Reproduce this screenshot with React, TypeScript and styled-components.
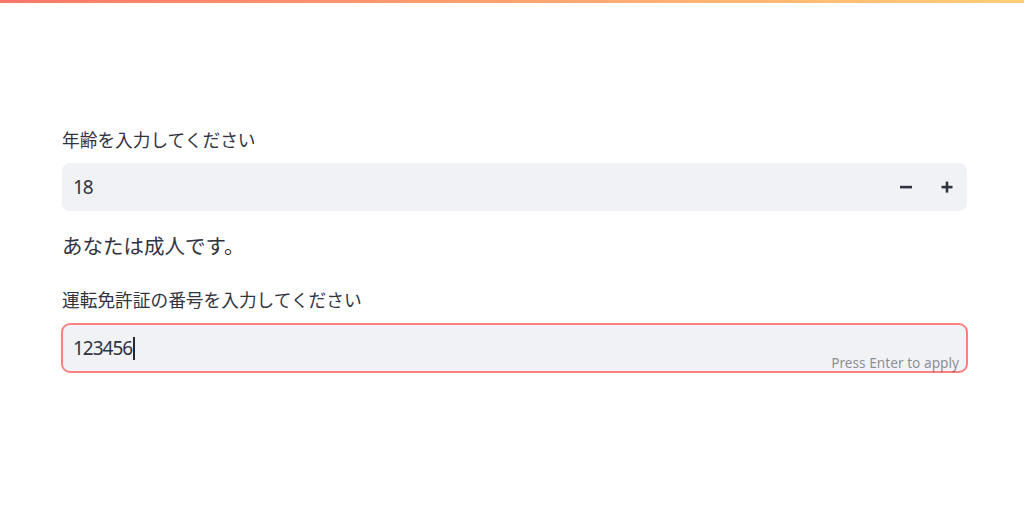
import React from "react";
import styled, { createGlobalStyle } from "styled-components";

const GlobalStyle = createGlobalStyle`
  html, body {
    margin: 0;
    padding: 0;
    background: #ffffff;
  }
  body {
    font-family: "Noto Sans", "Noto Sans CJK JP", sans-serif;
    color: rgb(49, 51, 63);
  }
`;

const Page = styled.div`
  width: 1024px;
  height: 508px;
  background: #ffffff;
  overflow: hidden;
`;

const Decoration = styled.div`
  height: 3px;
  background: linear-gradient(90deg, rgb(255, 104, 88), rgb(255, 200, 104));
  opacity: 0.9;
`;

const Main = styled.main`
  width: 906px;
  padding: 124px 0 0 61px;
  display: flex;
  flex-direction: column;
`;

const Label = styled.label`
  display: block;
  font-size: 17.7px;
  line-height: 27px;
  padding-left: 1px;
  margin-bottom: 9px;
  color: rgb(49, 51, 63);
`;

const NumberBox = styled.div`
  height: 48px;
  margin-left: 1px;
  width: 905px;
  background: #f0f2f6;
  border-radius: 8px;
  display: flex;
  align-items: center;
`;

const Value = styled.div`
  flex: 1;
  padding-left: 11px;
  font-size: 19px;
  letter-spacing: -1px;
  line-height: 48px;
  color: rgb(49, 51, 63);
`;

const StepButton = styled.button`
  width: 41px;
  height: 48px;
  border: none;
  background: transparent;
  padding: 0;
  display: flex;
  align-items: center;
  justify-content: center;
  color: rgb(49, 51, 63);
`;

const Message = styled.p`
  margin: 20px 0 25px 1px;
  font-size: 20.5px;
  line-height: 31px;
  color: rgb(49, 51, 63);
`;

const TextBox = styled.div`
  position: relative;
  box-sizing: border-box;
  height: 50px;
  width: 907px;
  border: 2px solid rgb(252, 128, 128);
  border-radius: 9px;
  background: #f0f2f6;
  display: flex;
  align-items: center;
`;

const TextValue = styled.div`
  padding-left: 10px;
  font-size: 19px;
  letter-spacing: -1px;
  line-height: 46px;
  color: rgb(49, 51, 63);
  display: flex;
  align-items: center;
`;

const Caret = styled.span`
  display: inline-block;
  width: 2px;
  height: 23px;
  margin-left: 1px;
  background: rgb(38, 39, 48);
`;

const Hint = styled.span`
  position: absolute;
  right: 7px;
  bottom: -2px;
  font-size: 13.7px;
  line-height: 20px;
  color: rgba(49, 51, 63, 0.55);
`;

const MinusIcon = () => (
  <svg width="14" height="14" viewBox="0 0 14 14">
    <rect x="1" y="5.8" width="12" height="2.6" fill="currentColor" />
  </svg>
);

const PlusIcon = () => (
  <svg width="14" height="14" viewBox="0 0 14 14">
    <rect x="1.5" y="5.8" width="11" height="2.6" fill="currentColor" />
    <rect x="5.7" y="1.6" width="2.6" height="11" fill="currentColor" />
  </svg>
);

export default function App() {
  return (
    <Page>
      <GlobalStyle />
      <Decoration />
      <Main>
        <Label>年齢を入力してください</Label>
        <NumberBox>
          <Value>18</Value>
          <StepButton aria-label="decrement">
            <MinusIcon />
          </StepButton>
          <StepButton aria-label="increment">
            <PlusIcon />
          </StepButton>
        </NumberBox>
        <Message>あなたは成人です。</Message>
        <Label>運転免許証の番号を入力してください</Label>
        <TextBox>
          <TextValue>
            123456
            <Caret />
          </TextValue>
          <Hint>Press Enter to apply</Hint>
        </TextBox>
      </Main>
    </Page>
  );
}
